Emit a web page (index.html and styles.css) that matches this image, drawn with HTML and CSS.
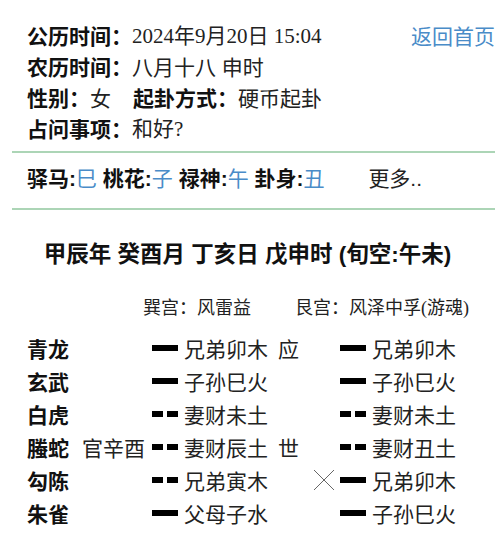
FILE: index.html
```html
<!DOCTYPE html>
<html lang="zh-CN">
<head>
    <meta charset="UTF-8">
    <meta name="viewport" content="width=device-width, initial-scale=1.0">
    <title>排盘结果</title>
    <link rel="stylesheet" href="styles.css">
</head>
<body>
    <div class="info">
        <div class="info-row">
            <span class="label">公历时间：</span><span class="value date">2024年9月20日 15:04</span>
            <a class="home" href="#">返回首页</a>
        </div>
        <div class="info-row"><span class="label">农历时间：</span><span class="value">八月十八 申时</span></div>
        <div class="info-row">
            <span class="label">性别：</span><span class="value">女</span>
            <span class="label method">起卦方式：</span><span class="value">硬币起卦</span>
        </div>
        <div class="info-row"><span class="label">占问事项：</span><span class="value date">和好?</span></div>
    </div>

    <div class="divider"></div>

    <div class="shensha">
        <b>驿马:</b><span class="hl">巳</span>
        <b>桃花:</b><span class="hl">子</span>
        <b>禄神:</b><span class="hl">午</span>
        <b>卦身:</b><span class="hl">丑</span>
        <a class="more" href="#">更多..</a>
    </div>

    <div class="divider"></div>

    <h2 class="ganzhi">甲辰年 癸酉月 丁亥日 戊申时 (旬空:午未)</h2>

    <div class="gua-head">
        <span class="gua-name">巽宫：风雷益</span>
        <span class="gua-name">艮宫：风泽中孚<span class="paren">(</span>游魂<span class="paren">)</span></span>
    </div>

    <div class="yao-table">
        <div class="yao-row">
            <span class="god">青龙</span><span class="fushen"></span>
            <span class="yao"><i class="bar"></i>兄弟卯木</span>
            <span class="mark">应</span><span class="move"></span>
            <span class="yao"><i class="bar"></i>兄弟卯木</span>
        </div>
        <div class="yao-row">
            <span class="god">玄武</span><span class="fushen"></span>
            <span class="yao"><i class="bar"></i>子孙巳火</span>
            <span class="mark"></span><span class="move"></span>
            <span class="yao"><i class="bar"></i>子孙巳火</span>
        </div>
        <div class="yao-row">
            <span class="god">白虎</span><span class="fushen"></span>
            <span class="yao"><i class="bar broken"></i>妻财未土</span>
            <span class="mark"></span><span class="move"></span>
            <span class="yao"><i class="bar broken"></i>妻财未土</span>
        </div>
        <div class="yao-row">
            <span class="god">螣蛇</span><span class="fushen">官辛酉</span>
            <span class="yao"><i class="bar broken"></i>妻财辰土</span>
            <span class="mark">世</span><span class="move"></span>
            <span class="yao"><i class="bar broken"></i>妻财丑土</span>
        </div>
        <div class="yao-row">
            <span class="god">勾陈</span><span class="fushen"></span>
            <span class="yao"><i class="bar broken"></i>兄弟寅木</span>
            <span class="mark"></span>
            <span class="move"><svg width="22" height="22" viewBox="0 0 22 22"><path d="M1 1L21 21M21 1L1 21" stroke="#666" stroke-width="1" fill="none"/></svg></span>
            <span class="yao"><i class="bar"></i>兄弟卯木</span>
        </div>
        <div class="yao-row">
            <span class="god">朱雀</span><span class="fushen"></span>
            <span class="yao"><i class="bar"></i>父母子水</span>
            <span class="mark"></span><span class="move"></span>
            <span class="yao"><i class="bar"></i>子孙巳火</span>
        </div>
    </div>
</body>
</html>
```

FILE: styles.css
```css
body {
    margin: 0;
    background: #fff;
    color: #111;
    font-family: "Liberation Sans", "Noto Sans CJK SC", sans-serif;
    font-size: 21px;
    overflow: hidden;
}
a {
    text-decoration: none;
}
.info {
    padding: 21px 0 0 27px;
    line-height: 31px;
}
.info-row {
    display: flex;
    white-space: nowrap;
}
.label {
    font-weight: bold;
    color: #111;
}
.value {
    color: #222;
}
.date {
    font-family: "Liberation Serif", "Noto Sans CJK SC", serif;
}
.method {
    margin-left: 22px;
}
.home {
    margin-left: auto;
    color: #4a8cc8;
}
.divider {
    margin-left: 12px;
    height: 2px;
    background: #acd5b6;
}
.info + .divider {
    margin-top: 6px;
}
.shensha {
    padding: 10px 0 14px 27px;
    line-height: 31px;
    white-space: nowrap;
}
.shensha b {
    color: #111;
}
.hl {
    color: #4a8cc8;
}
.more {
    margin-left: 38px;
    color: #222;
}
.ganzhi {
    margin: 29px 0 0;
    font-size: 22.5px;
    line-height: 31px;
    text-align: center;
    color: #111;
}
.gua-head {
    display: flex;
    margin-top: 23px;
    padding-left: 143px;
    font-size: 18px;
    line-height: 31px;
    color: #222;
}
.gua-head .gua-name:first-child {
    width: 152px;
}
.paren {
    font-family: "Liberation Serif", serif;
}
.yao-table {
    margin-top: 7px;
    padding-left: 27px;
}
.yao-row {
    display: grid;
    grid-template-columns: 53px 72px 126px 35px 27px auto;
    align-items: center;
    height: 33px;
    white-space: nowrap;
    color: #222;
}
.god {
    font-weight: bold;
    color: #111;
}
.fushen {
    padding-left: 2px;
}
.yao {
    display: flex;
    align-items: center;
}
.bar {
    display: inline-block;
    width: 26px;
    height: 6px;
    margin-right: 6px;
    background: #000;
}
.bar.broken {
    background: linear-gradient(to right, #000 0 11px, transparent 11px 15px, #000 15px);
}
.move {
    display: flex;
    align-items: center;
}
.move svg {
    display: block;
}
```
